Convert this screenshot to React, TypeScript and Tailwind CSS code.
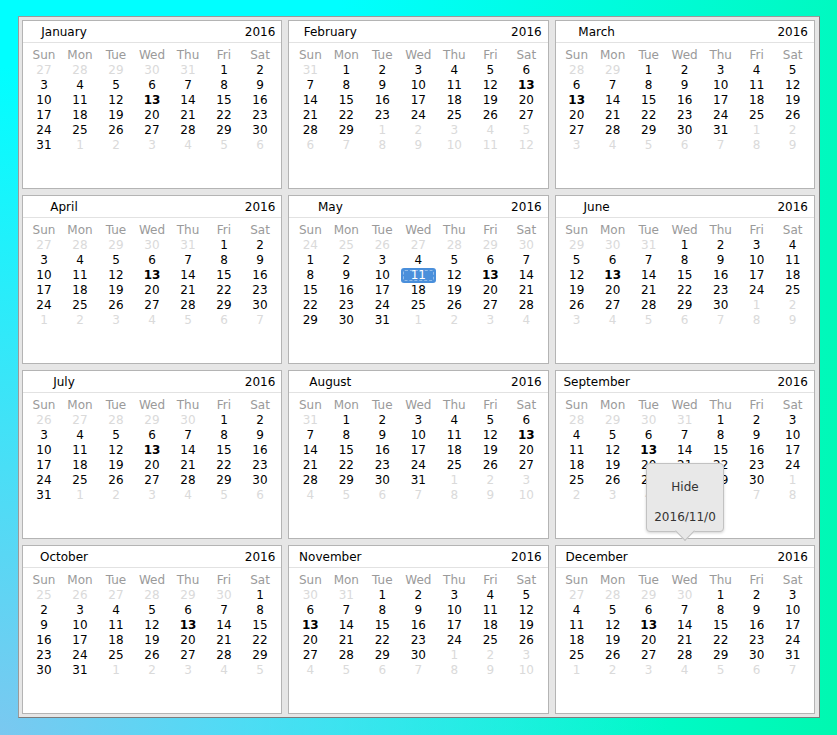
const MONTHS = [
  "January", "February", "March", "April", "May", "June",
  "July", "August", "September", "October", "November", "December",
];
const DAYS = ["Sun", "Mon", "Tue", "Wed", "Thu", "Fri", "Sat"];
const YEAR = 2016;

type Cell = { day: number; inMonth: boolean };

function monthCells(month: number): Cell[] {
  const first = new Date(YEAR, month, 1).getDay();
  const lead = first === 0 ? 7 : first;
  const start = new Date(YEAR, month, 1 - lead);
  const cells: Cell[] = [];
  for (let i = 0; i < 42; i++) {
    const d = new Date(start.getFullYear(), start.getMonth(), start.getDate() + i);
    cells.push({ day: d.getDate(), inMonth: d.getMonth() === month });
  }
  return cells;
}

function MonthCard({ month }: { month: number }) {
  const cells = monthCells(month);
  return (
    <div className="bg-white border border-[#b4b4b4] flex flex-col min-w-0">
      {/* Header */}
      <div className="h-[22px] flex items-center border-b border-[#e2e2e2] text-black">
        <span className="w-[82px] text-center">{MONTHS[month]}</span>
        <span className="ml-auto pr-[6px]">{YEAR}</span>
      </div>

      {/* Grid */}
      <div className="pt-[5px] pl-[3px] grid grid-cols-[repeat(7,36px)] leading-[15px]">
        {DAYS.map((d) => (
          <span key={d} className="text-center text-[#9a9a9a] h-[15px]">{d}</span>
        ))}
        {cells.map((c, i) => {
          const selected = month === 4 && c.inMonth && c.day === 11;
          const bold = c.inMonth && c.day === 13;
          if (selected) {
            return (
              <span key={i} className="flex justify-center h-[15px]">
                <span className="relative w-[35px] h-[15px] rounded-[3px] bg-[#4a8fdb] text-white text-center">
                  <span className="absolute inset-[2px] border border-dashed border-white/40 rounded-[2px]" />
                  11
                </span>
              </span>
            );
          }
          return (
            <span
              key={i}
              className={
                "text-center h-[15px] " +
                (c.inMonth ? "text-black" : "text-[#dadada]") +
                (bold ? " font-bold" : "")
              }
            >
              {c.day}
            </span>
          );
        })}
      </div>
    </div>
  );
}

export default function App() {
  return (
    <div
      className="relative w-[837px] h-[735px] overflow-hidden pt-[16px] pl-[18px] text-[12px] bg-[radial-gradient(circle_at_0%_100%,#7ac8f0_0%,rgba(122,200,240,0)_60%),linear-gradient(100deg,#00ffff_35%,#00f8b0_100%)]"
      style={{ fontFamily: '"DejaVu Sans", "Liberation Sans", sans-serif' }}
    >
      {/* Panel */}
      <div className="w-[802px] h-[702px] bg-[#e6e6e6] border border-[#9a9a9a] border-r-[#7c7c7c] border-b-[#7c7c7c] pt-[3px] pb-[3px] pl-[3px] pr-[4px] grid grid-cols-3 grid-rows-4 gap-[6px]">
        {MONTHS.map((_, i) => (
          <MonthCard key={i} month={i} />
        ))}
      </div>

      {/* Tooltip */}
      <div className="absolute left-[646px] top-[463px] w-[78px] h-[69px] bg-[#e8e8e8] border border-[#c2c2c2] rounded-[4px] shadow-[0_1px_3px_rgba(0,0,0,0.18)] flex flex-col items-center text-[#333]">
        <span className="mt-[16px] leading-[15px]">Hide</span>
        <span className="mt-[15px] leading-[15px]">2016/11/0</span>
        <span className="absolute bottom-[-7px] left-1/2 -translate-x-1/2 w-[14px] h-[14px] rotate-45 bg-[#e8e8e8] border-r border-b border-[#c2c2c2]" />
      </div>
    </div>
  );
}
